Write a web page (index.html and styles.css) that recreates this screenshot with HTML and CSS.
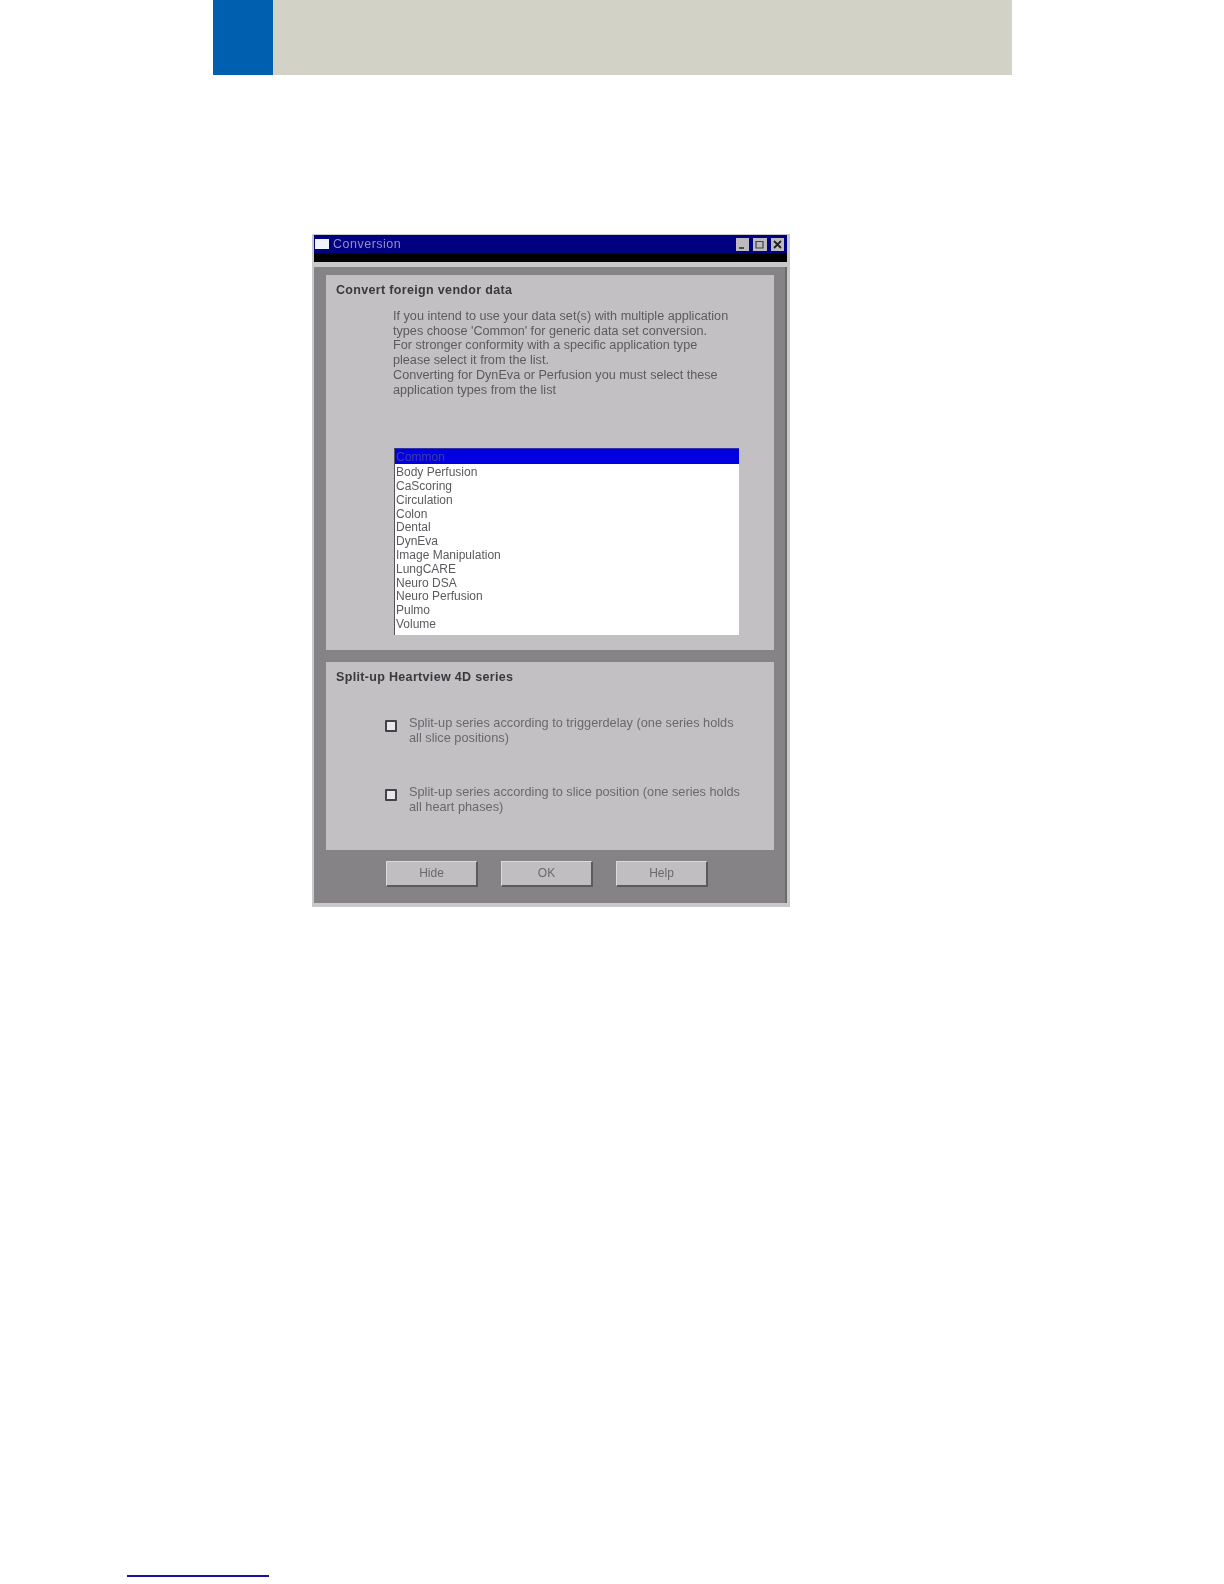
FILE: index.html
```html
<!DOCTYPE html>
<html lang="en">
<head>
<meta charset="utf-8">
<title>Conversion</title>
<link rel="stylesheet" href="styles.css">
</head>
<body>
<header class="banner"><div class="tab"></div><div class="strip"></div></header>
<main class="window">
  <div class="titlebar">
    <span class="app-icon"></span>
    <span class="title">Conversion</span>
    <span class="win-btns">
      <span class="win-btn"><svg viewBox="0 0 13 13"><path d="M3 10h5" stroke="#333" stroke-width="1.6"/></svg></span>
      <span class="win-btn"><svg viewBox="0 0 13 13"><path d="M3 3.5h7v6.5H3z" fill="none" stroke="#444" stroke-width="1.2"/></svg></span>
      <span class="win-btn"><svg viewBox="0 0 13 13"><path d="M3 3l7 7M10 3l-7 7" stroke="#222" stroke-width="1.8"/></svg></span>
    </span>
  </div>
  <div class="blackband"></div>
  <div class="client">
    <section class="panel panel-top">
      <h2>Convert foreign vendor data</h2>
      <p class="intro">If you intend to use your data set(s) with multiple application<br>types choose 'Common' for generic data set conversion.<br>For stronger conformity with a specific application type<br>please select it from the list.<br>Converting for DynEva or Perfusion you must select these<br>application types from the list</p>
      <ul class="list">
        <li class="sel">Common</li>
        <li>Body Perfusion</li>
        <li>CaScoring</li>
        <li>Circulation</li>
        <li>Colon</li>
        <li>Dental</li>
        <li>DynEva</li>
        <li>Image Manipulation</li>
        <li>LungCARE</li>
        <li>Neuro DSA</li>
        <li>Neuro Perfusion</li>
        <li>Pulmo</li>
        <li>Volume</li>
      </ul>
    </section>
    <section class="panel panel-bottom">
      <h2>Split-up Heartview 4D series</h2>
      <div class="check first"><span class="box"></span><span class="label">Split-up series according to triggerdelay (one series holds<br>all slice positions)</span></div>
      <div class="check second"><span class="box"></span><span class="label">Split-up series according to slice position (one series holds<br>all heart phases)</span></div>
    </section>
    <div class="buttons">
      <span class="btn">Hide</span>
      <span class="btn">OK</span>
      <span class="btn">Help</span>
    </div>
  </div>
</main>
<div class="footrule"></div>
</body>
</html>
```

FILE: styles.css
```css
* { box-sizing: border-box; }
html, body { margin: 0; padding: 0; background: #fff; }
body { width: 1224px; height: 1584px; overflow: hidden; font-family: "Liberation Sans", Arial, sans-serif; }

.banner { display: flex; margin-left: 213px; width: 799px; height: 75px; }
.tab { width: 60px; background: #0060b0; }
.strip { flex: 1; background: #d2d2c6; }

.window {
  margin: 159px 0 0 312px;
  width: 478px;
  height: 673px;
  background: #c9c8ca;
  padding: 1px 3px 4px 2px;
  display: flex;
  flex-direction: column;
}
.titlebar {
  height: 18px;
  background: #000080;
  display: flex;
  align-items: center;
  padding: 0 3px 0 1px;
  flex: none;
}
.app-icon { width: 14px; height: 10px; background: #f2f2fa; margin-right: 4px; }
.title { color: #9090c4; font-size: 12.5px; letter-spacing: .5px; filter: blur(.5px); }
.win-btns { margin-left: auto; display: flex; gap: 4px; }
.win-btn { width: 13px; height: 13px; background: #bdbbbd; display: block; }
.win-btn + .win-btn { width: 14px; }
.win-btn + .win-btn + .win-btn { width: 13px; }
.win-btn svg { display: block; width: 13px; height: 13px; filter: blur(.5px); }
.blackband { height: 9px; background: #000; flex: none; }

.client {
  flex: 1;
  margin-top: 5px;
  background: #858385;
  padding: 8px 11px 0 12px;
  border-right: 2px solid #6c6a6c;
  display: flex;
  flex-direction: column;
}
.panel { background: #c3c0c4; flex: none; }
.panel-top { height: 375px; padding: 8px 0 0 10px; }
.panel-bottom { height: 188px; margin-top: 12px; padding: 8px 0 0 10px; }
h2 {
  margin: 0;
  font-size: 12.5px;
  line-height: 15px;
  font-weight: bold;
  color: #3a383c;
  letter-spacing: .33px;
  filter: blur(.5px);
}
.intro {
  margin: 11px 0 0 57px;
  font-size: 12.65px;
  line-height: 14.7px;
  color: #5c5a5e;
  filter: blur(.55px);
}
.list {
  list-style: none;
  margin: 51px 0 0 58px;
  padding: 0;
  width: 345px;
  height: 187px;
  background: #fff;
  border-left: 1px solid #55535a;
  border-top: 1px solid #3030a0;
  font-size: 12px;
  line-height: 13.8px;
  color: #5c5a5e;
}
.list li { padding-left: 1px; filter: blur(.5px); }
.list li.sel { background: #0000e0; color: #3c3ca8; height: 15px; margin-bottom: 2px; line-height: 16px; filter: none; }

.check { display: flex; align-items: flex-start; margin-left: 49px; }
.check.first { margin-top: 31px; }
.check.second { margin-top: 40px; }
.box {
  width: 12px;
  height: 12px;
  margin-top: 4px;
  background: #e8e6ea;
  border: 2px solid #444246;
  flex: none;
  border-radius: 1px;
  filter: blur(.5px);
}
.label {
  margin-left: 12px;
  font-size: 12.75px;
  line-height: 14.6px;
  color: #6a686c;
  filter: blur(.55px);
}

.buttons { display: flex; gap: 23px; margin: 11px 0 0 60px; }
.btn {
  width: 92px;
  height: 26px;
  background: #c0bec0;
  border-top: 1px solid #dadada;
  border-left: 1px solid #dadada;
  border-right: 2px solid #5c5a5c;
  border-bottom: 2px solid #5c5a5c;
  font-size: 12px;
  line-height: 23px;
  text-align: center;
  color: #6a686c;
  filter: blur(.3px);
}

.footrule { margin: 668px 0 0 127px; width: 142px; height: 1.5px; background: #1414a0; }
```
